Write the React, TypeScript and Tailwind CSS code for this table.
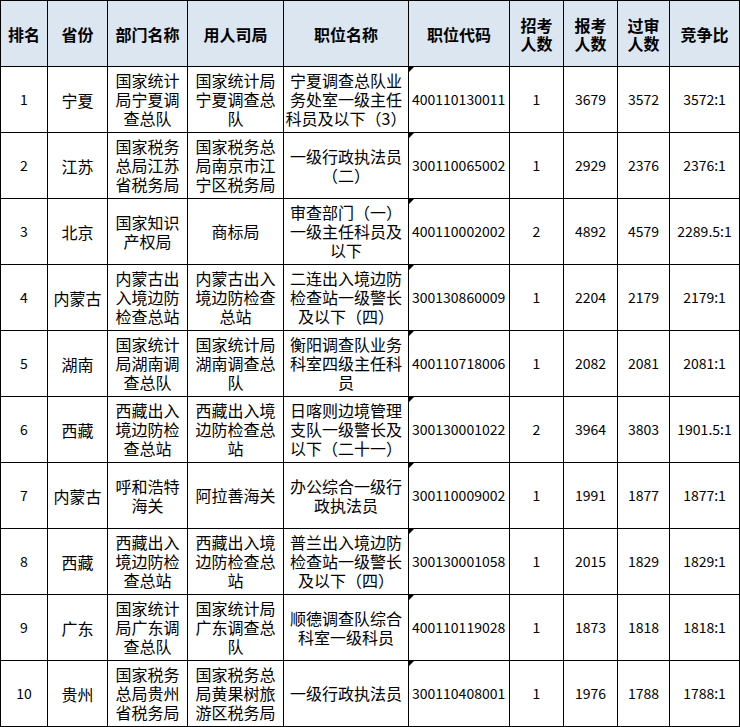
import React from 'react';

type Row = {
    rank: string;
    province: string;
    dept: string[];
    bureau: string[];
    post: string[];
    code: string;
    hire: string;
    apply: string;
    passed: string;
    ratio: string;
};

const rows: Row[] = [
    { rank: '1', province: '宁夏', dept: ['国家统计', '局宁夏调', '查总队'], bureau: ['国家统计局', '宁夏调查总', '队'], post: ['宁夏调查总队业', '务处室一级主任', '科员及以下（3）'], code: '400110130011', hire: '1', apply: '3679', passed: '3572', ratio: '3572:1' },
    { rank: '2', province: '江苏', dept: ['国家税务', '总局江苏', '省税务局'], bureau: ['国家税务总', '局南京市江', '宁区税务局'], post: ['一级行政执法员', '（二）'], code: '300110065002', hire: '1', apply: '2929', passed: '2376', ratio: '2376:1' },
    { rank: '3', province: '北京', dept: ['国家知识', '产权局'], bureau: ['商标局'], post: ['审查部门（一）', '一级主任科员及', '以下'], code: '400110002002', hire: '2', apply: '4892', passed: '4579', ratio: '2289.5:1' },
    { rank: '4', province: '内蒙古', dept: ['内蒙古出', '入境边防', '检查总站'], bureau: ['内蒙古出入', '境边防检查', '总站'], post: ['二连出入境边防', '检查站一级警长', '及以下（四）'], code: '300130860009', hire: '1', apply: '2204', passed: '2179', ratio: '2179:1' },
    { rank: '5', province: '湖南', dept: ['国家统计', '局湖南调', '查总队'], bureau: ['国家统计局', '湖南调查总', '队'], post: ['衡阳调查队业务', '科室四级主任科', '员'], code: '400110718006', hire: '1', apply: '2082', passed: '2081', ratio: '2081:1' },
    { rank: '6', province: '西藏', dept: ['西藏出入', '境边防检', '查总站'], bureau: ['西藏出入境', '边防检查总', '站'], post: ['日喀则边境管理', '支队一级警长及', '以下（二十一）'], code: '300130001022', hire: '2', apply: '3964', passed: '3803', ratio: '1901.5:1' },
    { rank: '7', province: '内蒙古', dept: ['呼和浩特', '海关'], bureau: ['阿拉善海关'], post: ['办公综合一级行', '政执法员'], code: '300110009002', hire: '1', apply: '1991', passed: '1877', ratio: '1877:1' },
    { rank: '8', province: '西藏', dept: ['西藏出入', '境边防检', '查总站'], bureau: ['西藏出入境', '边防检查总', '站'], post: ['普兰出入境边防', '检查站一级警长', '及以下（四）'], code: '300130001058', hire: '1', apply: '2015', passed: '1829', ratio: '1829:1' },
    { rank: '9', province: '广东', dept: ['国家统计', '局广东调', '查总队'], bureau: ['国家统计局', '广东调查总', '队'], post: ['顺德调查队综合', '科室一级科员'], code: '400110119028', hire: '1', apply: '1873', passed: '1818', ratio: '1818:1' },
    { rank: '10', province: '贵州', dept: ['国家税务', '总局贵州', '省税务局'], bureau: ['国家税务总', '局黄果树旅', '游区税务局'], post: ['一级行政执法员'], code: '300110408001', hire: '1', apply: '1976', passed: '1788', ratio: '1788:1' },
];

const headers: string[][] = [
    ['排名'], ['省份'], ['部门名称'], ['用人司局'], ['职位名称'], ['职位代码'],
    ['招考', '人数'], ['报考', '人数'], ['过审', '人数'], ['竞争比'],
];

const Lines: React.FC<{ lines: string[] }> = ({ lines }) => (
    <div className="flex flex-col items-center">
        {lines.map((l, i) => (
            <span key={i} className="whitespace-nowrap">{l}</span>
        ))}
    </div>
);

const Cell: React.FC<{ children: React.Node } | { children: React.ReactNode }> = ({ children }) => (
    <div className="bg-white flex items-center justify-center text-center">{children}</div>
);

const Num: React.FC<{ v: string }> = ({ v }) => (
    <div className="bg-white flex items-center justify-center text-[14px]">{v}</div>
);

export default function App() {
    return (
        <div
            className="w-[740px] bg-black p-px text-black"
            style={{ fontFamily: '"Noto Sans CJK SC", "Noto Sans", sans-serif' }}
        >
            <div className="grid grid-cols-[46px_59px_79px_95px_124px_100px_53px_53px_51px_69px] auto-rows-[65px] gap-px">
                {headers.map((h, i) => (
                    <div key={i} className="bg-[#dce6f1] flex flex-col items-center justify-center font-bold text-[16px] leading-[18px]">
                        {h.map(t => <span key={t}>{t}</span>)}
                    </div>
                ))}

                {rows.map(r => (
                    <React.Fragment key={r.rank}>
                        <Num v={r.rank} />
                        <Cell><span className="text-[16px]">{r.province}</span></Cell>
                        <Cell><div className="text-[16px] leading-[19px]"><Lines lines={r.dept} /></div></Cell>
                        <Cell><div className="text-[16px] leading-[19px]"><Lines lines={r.bureau} /></div></Cell>
                        <Cell><div className="text-[16px] leading-[19px]"><Lines lines={r.post} /></div></Cell>
                        <div className="relative bg-white flex items-center pl-[3px] text-[14px]">
                            <span className="absolute top-0 left-0 w-0 h-0 border-t-[5px] border-r-[5px] border-t-black border-r-transparent" />
                            {r.code}
                        </div>
                        <Num v={r.hire} />
                        <Num v={r.apply} />
                        <Num v={r.passed} />
                        <Num v={r.ratio} />
                    </React.Fragment>
                ))}
            </div>
        </div>
    );
}
